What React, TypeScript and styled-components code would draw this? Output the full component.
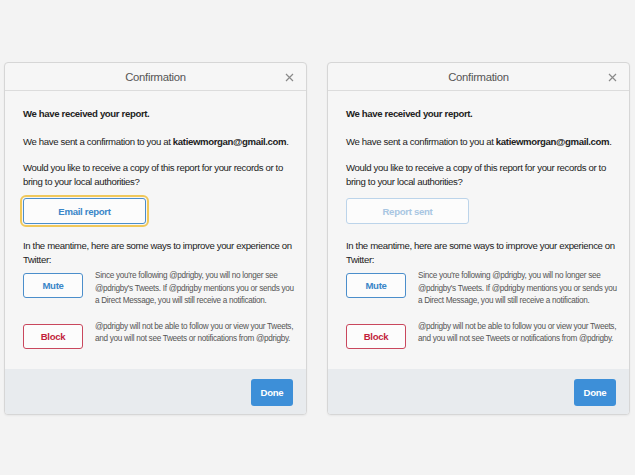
import React from "react";
import styled, { createGlobalStyle } from "styled-components";

const Global = createGlobalStyle`
  html, body { margin: 0; padding: 0; }
  body {
    background: #f3f3f3;
    font-family: "Liberation Sans", Arial, Helvetica, sans-serif;
    color: #222;
  }
`;

const Page = styled.div`
  display: flex;
  gap: 20px;
  padding: 62px 0 0 4px;
  height: 475px;
  box-sizing: border-box;
`;

const Dialog = styled.div`
  width: 303px;
  height: 353px;
  box-sizing: border-box;
  border: 1px solid #d6d6d6;
  border-radius: 4px;
  background: #f6f6f6;
  display: flex;
  flex-direction: column;
  overflow: hidden;
  box-shadow: 0 1px 2px rgba(0, 0, 0, 0.05);
`;

const Header = styled.div`
  height: 27px;
  flex: none;
  border-bottom: 1px solid #dcdcdc;
  position: relative;
  display: flex;
  align-items: center;
  justify-content: center;
`;

const Title = styled.div`
  font-size: 11.3px;
  letter-spacing: -0.3px;
  color: #555;
`;

const Close = styled.button`
  position: absolute;
  right: 12px;
  top: 10px;
  width: 9px;
  height: 9px;
  padding: 0;
  border: 0;
  background: transparent;
  display: flex;
`;

const Body = styled.div`
  flex: 1;
  min-height: 0;
  padding: 16px 10px 0 18px;
  display: flex;
  flex-direction: column;
`;

const Para = styled.p<{ $gap?: number }>`
  margin: 0 0 ${(p) => p.$gap ?? 14}px 0;
  font-size: 9.6px;
  letter-spacing: -0.36px;
  line-height: 14px;
  color: #222;
`;

const Strong = styled.b`
  font-weight: 700;
`;

const OutlineButton = styled.button<{
  $tone: "blue" | "red" | "faded";
  $focused?: boolean;
  $w: number;
  $h: number;
}>`
  width: ${(p) => p.$w}px;
  height: ${(p) => p.$h}px;
  box-sizing: border-box;
  border-radius: 3px;
  background: #fcfcfc;
  font-family: inherit;
  font-weight: 700;
  font-size: 9.6px;
  letter-spacing: -0.3px;
  flex: none;
  cursor: pointer;
  border: 1px solid
    ${(p) => (p.$tone === "red" ? "#c9475d" : p.$tone === "faded" ? "#bcd4ea" : "#4b8ecb")};
  color: ${(p) => (p.$tone === "red" ? "#c21f3c" : p.$tone === "faded" ? "#a8c6e2" : "#3a86c8")};
  outline: ${(p) => (p.$focused ? "2px solid #f0c85a" : "none")};
  outline-offset: 1px;
`;

const ActionRow = styled.div<{ $mb: number }>`
  display: flex;
  align-items: flex-start;
  gap: 12px;
  margin-bottom: ${(p) => p.$mb}px;
`;

const ActionText = styled.div`
  font-size: 8.2px;
  letter-spacing: -0.3px;
  line-height: 12.6px;
  color: #555;
  margin-top: -3px;
`;

const Footer = styled.div`
  height: 45px;
  flex: none;
  background: #e8ebee;
  display: flex;
  align-items: center;
  justify-content: flex-end;
  padding-right: 13px;
`;

const Done = styled.button`
  width: 42px;
  height: 27px;
  border: 0;
  border-radius: 3px;
  background: #3d8fd8;
  color: #fff;
  font-family: inherit;
  font-weight: 700;
  font-size: 9.6px;
  letter-spacing: -0.3px;
  margin-top: 1px;
`;

const XIcon = () => (
  <svg width="9" height="9" viewBox="0 0 9 9">
    <path d="M1 1 L8 8 M8 1 L1 8" stroke="#8a8a8a" strokeWidth="1.2" />
  </svg>
);

const ConfirmDialog: React.FC<{ sent?: boolean }> = ({ sent }) => (
  <Dialog>
    <Header>
      <Title>Confirmation</Title>
      <Close aria-label="Close">
        <XIcon />
      </Close>
    </Header>
    <Body>
      <Para>
        <Strong>We have received your report.</Strong>
      </Para>
      <Para $gap={12}>
        We have sent a confirmation to you at <Strong>katiewmorgan@gmail.com</Strong>.
      </Para>
      <Para $gap={9}>
        Would you like to receive a copy of this report for your records or to bring to your local
        authorities?
      </Para>
      <ActionRow $mb={15}>
        {sent ? (
          <OutlineButton $tone="faded" $w={123} $h={26}>Report sent</OutlineButton>
        ) : (
          <OutlineButton $tone="blue" $focused $w={123} $h={26}>Email report</OutlineButton>
        )}
      </ActionRow>
      <Para $gap={6}>
        In the meantime, here are some ways to improve your experience on Twitter:
      </Para>
      <ActionRow $mb={16}>
        <OutlineButton $tone="blue" $w={60} $h={25}>Mute</OutlineButton>
        <ActionText>
          Since you're following @pdrigby, you will no longer see @pdrigby's Tweets. If @pdrigby
          mentions you or sends you a Direct Message, you will still receive a notification.
        </ActionText>
      </ActionRow>
      <ActionRow $mb={0}>
        <OutlineButton $tone="red" $w={60} $h={25}>Block</OutlineButton>
        <ActionText>
          @pdrigby will not be able to follow you or view your Tweets, and you will not see Tweets
          or notifications from @pdrigby.
        </ActionText>
      </ActionRow>
    </Body>
    <Footer>
      <Done>Done</Done>
    </Footer>
  </Dialog>
);

export default function App() {
  return (
    <>
      <Global />
      <Page>
        <ConfirmDialog />
        <ConfirmDialog sent />
      </Page>
    </>
  );
}
